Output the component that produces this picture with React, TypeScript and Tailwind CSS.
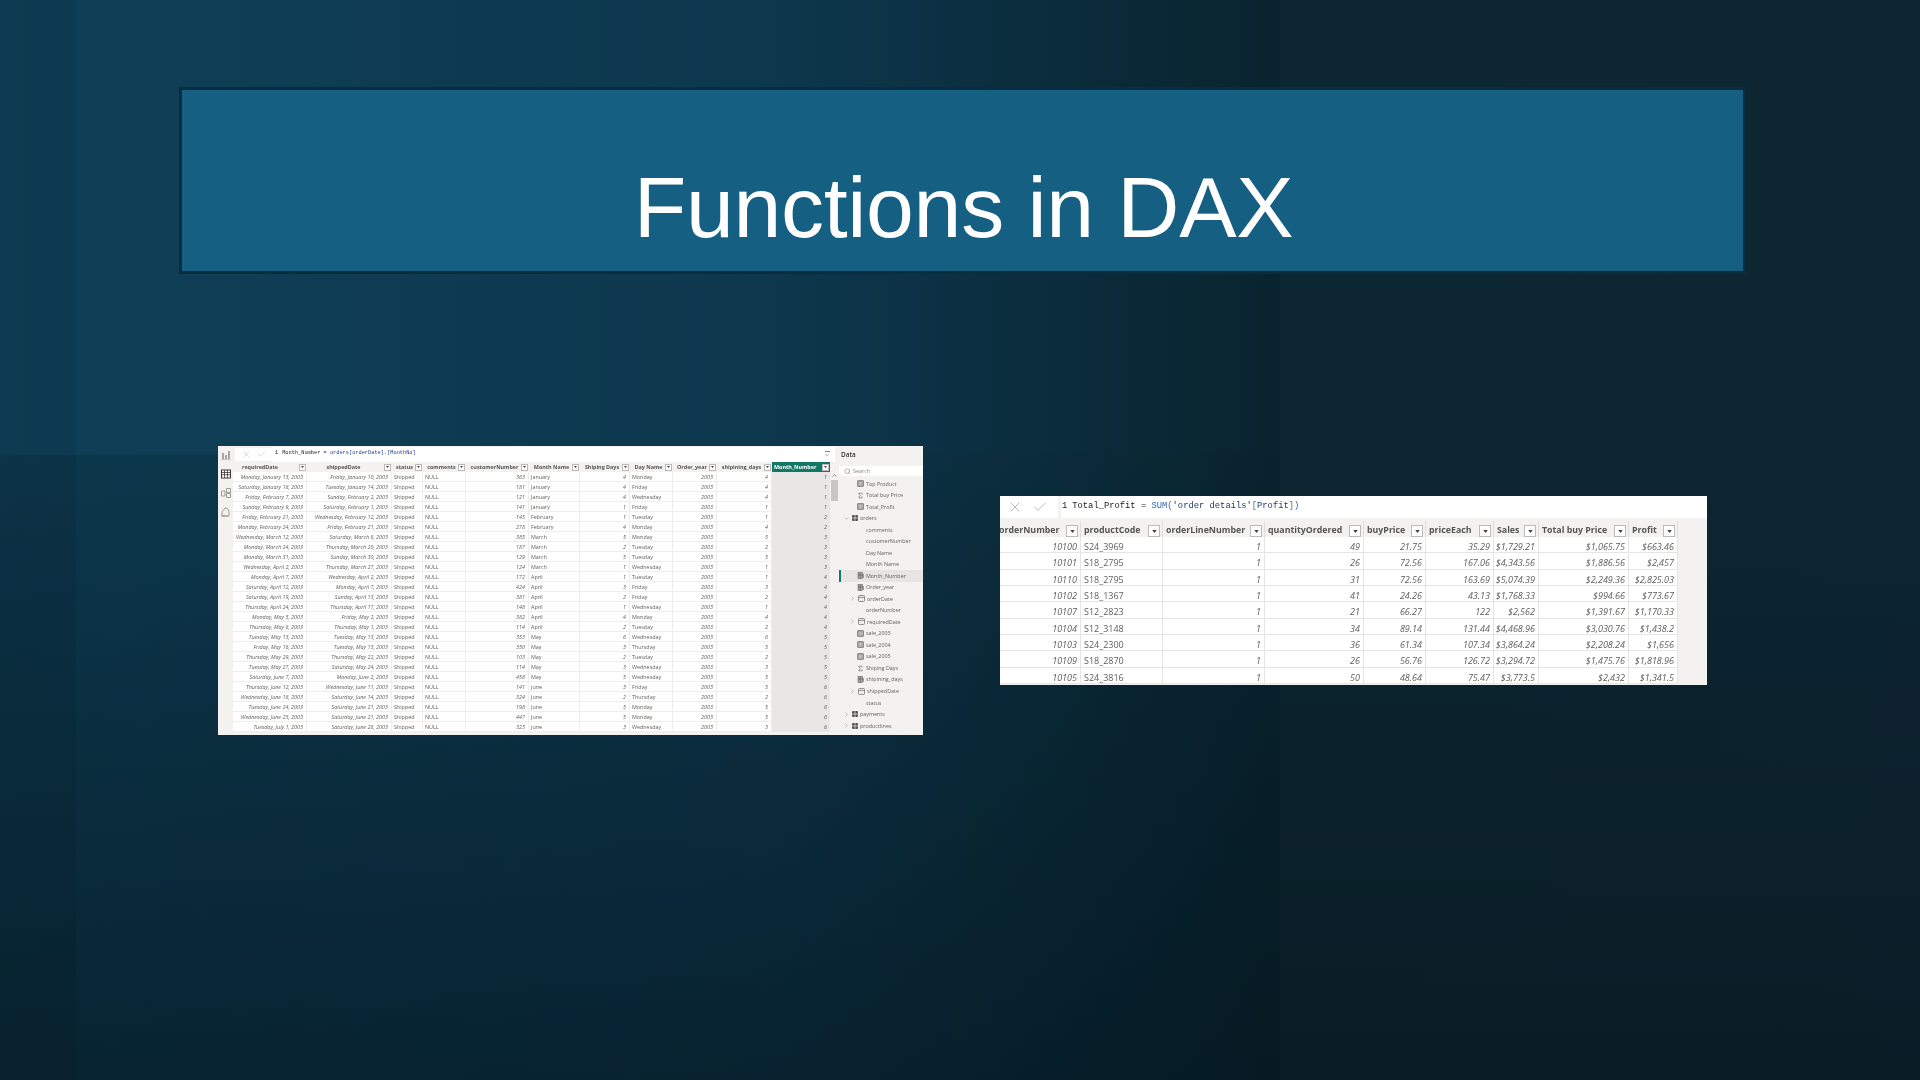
import { Check, ChevronDown, ChevronRight, ChevronUp, Search, Sigma, X } from "lucide-react";
import type { ReactNode } from "react";

const SANS = "font-['Open_Sans',sans-serif]";

type LeftRow = [string, string, string, string, string, string, string, string];

const LEFT_COLUMNS = [
  { name: "requiredDate", width: "w-[74px]", pad: "pr-[14px]" },
  { name: "shippedDate", width: "w-[85px]", pad: "pr-[6px]" },
  { name: "status", width: "w-[31px]", pad: "" },
  { name: "comments", width: "w-[43px]", pad: "" },
  { name: "customerNumber", width: "w-[63px]", pad: "" },
  { name: "Month Name", width: "w-[51px]", pad: "" },
  { name: "Shiping Days", width: "w-[50px]", pad: "" },
  { name: "Day Name", width: "w-[43px]", pad: "" },
  { name: "Order_year", width: "w-[44px]", pad: "" },
  { name: "shipining_days", width: "w-[55px]", pad: "" },
];

// required, shipped, customer, month, shipping days, day, shipining days, month number
const LEFT_ROWS: LeftRow[] = [
  ["Monday, January 13, 2003", "Friday, January 10, 2003", "363", "January", "4", "Monday", "4", "1"],
  ["Saturday, January 18, 2003", "Tuesday, January 14, 2003", "181", "January", "4", "Friday", "4", "1"],
  ["Friday, February 7, 2003", "Sunday, February 2, 2003", "121", "January", "4", "Wednesday", "4", "1"],
  ["Sunday, February 9, 2003", "Saturday, February 1, 2003", "141", "January", "1", "Friday", "1", "1"],
  ["Friday, February 21, 2003", "Wednesday, February 12, 2003", "145", "February", "1", "Tuesday", "1", "2"],
  ["Monday, February 24, 2003", "Friday, February 21, 2003", "278", "February", "4", "Monday", "4", "2"],
  ["Wednesday, March 12, 2003", "Saturday, March 8, 2003", "385", "March", "5", "Monday", "5", "3"],
  ["Monday, March 24, 2003", "Thursday, March 20, 2003", "187", "March", "2", "Tuesday", "2", "3"],
  ["Monday, March 31, 2003", "Sunday, March 30, 2003", "129", "March", "5", "Tuesday", "5", "3"],
  ["Wednesday, April 2, 2003", "Thursday, March 27, 2003", "124", "March", "1", "Wednesday", "1", "3"],
  ["Monday, April 7, 2003", "Wednesday, April 2, 2003", "172", "April", "1", "Tuesday", "1", "4"],
  ["Saturday, April 12, 2003", "Monday, April 7, 2003", "424", "April", "3", "Friday", "3", "4"],
  ["Saturday, April 19, 2003", "Sunday, April 13, 2003", "381", "April", "2", "Friday", "2", "4"],
  ["Thursday, April 24, 2003", "Thursday, April 17, 2003", "148", "April", "1", "Wednesday", "1", "4"],
  ["Monday, May 5, 2003", "Friday, May 2, 2003", "382", "April", "4", "Monday", "4", "4"],
  ["Thursday, May 8, 2003", "Thursday, May 1, 2003", "114", "April", "2", "Tuesday", "2", "4"],
  ["Tuesday, May 13, 2003", "Tuesday, May 13, 2003", "353", "May", "6", "Wednesday", "6", "5"],
  ["Friday, May 16, 2003", "Tuesday, May 13, 2003", "350", "May", "5", "Thursday", "5", "5"],
  ["Thursday, May 29, 2003", "Thursday, May 22, 2003", "103", "May", "2", "Tuesday", "2", "5"],
  ["Tuesday, May 27, 2003", "Saturday, May 24, 2003", "114", "May", "3", "Wednesday", "3", "5"],
  ["Saturday, June 7, 2003", "Monday, June 2, 2003", "458", "May", "5", "Wednesday", "5", "5"],
  ["Thursday, June 12, 2003", "Wednesday, June 11, 2003", "141", "June", "5", "Friday", "5", "6"],
  ["Wednesday, June 18, 2003", "Saturday, June 14, 2003", "324", "June", "2", "Thursday", "2", "6"],
  ["Tuesday, June 24, 2003", "Saturday, June 21, 2003", "198", "June", "5", "Monday", "5", "6"],
  ["Wednesday, June 25, 2003", "Saturday, June 21, 2003", "447", "June", "5", "Monday", "5", "6"],
  ["Tuesday, July 1, 2003", "Saturday, June 28, 2003", "323", "June", "3", "Wednesday", "3", "6"],
];

const RIGHT_COLUMNS = [
  { name: "orderNumber", width: "w-[81px]", clip: true },
  { name: "productCode", width: "w-[82px]" },
  { name: "orderLineNumber", width: "w-[102px]" },
  { name: "quantityOrdered", width: "w-[99px]" },
  { name: "buyPrice", width: "w-[62px]" },
  { name: "priceEach", width: "w-[68px]" },
  { name: "Sales", width: "w-[45px]" },
  { name: "Total buy Price", width: "w-[90px]" },
  { name: "Profit", width: "w-[49px]" },
];

const RIGHT_ROWS = [
  ["10100", "S24_3969", "1", "49", "21.75", "35.29", "$1,729.21", "$1,065.75", "$663.46"],
  ["10101", "S18_2795", "1", "26", "72.56", "167.06", "$4,343.56", "$1,886.56", "$2,457"],
  ["10110", "S18_2795", "1", "31", "72.56", "163.69", "$5,074.39", "$2,249.36", "$2,825.03"],
  ["10102", "S18_1367", "1", "41", "24.26", "43.13", "$1,768.33", "$994.66", "$773.67"],
  ["10107", "S12_2823", "1", "21", "66.27", "122", "$2,562", "$1,391.67", "$1,170.33"],
  ["10104", "S12_3148", "1", "34", "89.14", "131.44", "$4,468.96", "$3,030.76", "$1,438.2"],
  ["10103", "S24_2300", "1", "36", "61.34", "107.34", "$3,864.24", "$2,208.24", "$1,656"],
  ["10109", "S18_2870", "1", "26", "56.76", "126.72", "$3,294.72", "$1,475.76", "$1,818.96"],
  ["10105", "S24_3816", "1", "50", "48.64", "75.47", "$3,773.5", "$2,432", "$1,341.5"],
];

type FieldKind = "measure" | "sigma" | "calc" | "date" | "table" | "none";

const FIELDS: { name: string; kind: FieldKind; expand?: "open" | "closed"; indent: string; active?: boolean }[] = [
  { name: "Top Product", kind: "measure", indent: "pl-[18px]" },
  { name: "Total buy Price", kind: "sigma", indent: "pl-[18px]" },
  { name: "Total_Profit", kind: "measure", indent: "pl-[18px]" },
  { name: "orders", kind: "table", expand: "open", indent: "pl-[4px]" },
  { name: "comments", kind: "none", indent: "pl-[18px]" },
  { name: "customerNumber", kind: "none", indent: "pl-[18px]" },
  { name: "Day Name", kind: "none", indent: "pl-[18px]" },
  { name: "Month Name", kind: "none", indent: "pl-[18px]" },
  { name: "Month_Number", kind: "calc", indent: "pl-[16px]", active: true },
  { name: "Order_year", kind: "calc", indent: "pl-[18px]" },
  { name: "orderDate", kind: "date", expand: "closed", indent: "pl-[10px]" },
  { name: "orderNumber", kind: "none", indent: "pl-[18px]" },
  { name: "requiredDate", kind: "date", expand: "closed", indent: "pl-[10px]" },
  { name: "sale_2003", kind: "measure", indent: "pl-[18px]" },
  { name: "sale_2004", kind: "measure", indent: "pl-[18px]" },
  { name: "sale_2005", kind: "measure", indent: "pl-[18px]" },
  { name: "Shiping Days", kind: "sigma", indent: "pl-[18px]" },
  { name: "shipining_days", kind: "calc", indent: "pl-[18px]" },
  { name: "shippedDate", kind: "date", expand: "closed", indent: "pl-[10px]" },
  { name: "status", kind: "none", indent: "pl-[18px]" },
  { name: "payments", kind: "table", expand: "closed", indent: "pl-[4px]" },
  { name: "productlines", kind: "table", expand: "closed", indent: "pl-[4px]" },
];

function FilterButton({ big }: { big?: boolean }) {
  return (
    <span
      className={`flex shrink-0 items-center justify-center border border-[#bdbbb9] bg-white ${
        big ? "h-[12px] w-[12px]" : "h-[7px] w-[7px]"
      }`}
    >
      <svg viewBox="0 0 6 4" className={big ? "h-[3px] w-[5px]" : "h-[2px] w-[3px]"}>
        <path d="M0 0h6L3 4z" fill="#444" />
      </svg>
    </span>
  );
}

function FieldIcon({ kind }: { kind: FieldKind }) {
  if (kind === "none") return <span className="w-[7px] shrink-0" />;
  if (kind === "sigma") return <Sigma className="h-[7px] w-[7px] shrink-0 text-[#555]" strokeWidth={2} />;
  if (kind === "table") {
    return (
      <svg viewBox="0 0 6 6" className="h-[6px] w-[6px] shrink-0">
        <rect width="6" height="6" rx="1" fill="#555" />
        <path d="M3 0v6M0 3h6" stroke="#fff" strokeWidth="0.6" />
      </svg>
    );
  }
  if (kind === "date") {
    return (
      <svg viewBox="0 0 7 7" className="h-[7px] w-[7px] shrink-0">
        <rect x="0.5" y="0.5" width="6" height="6" rx="1" fill="#eee" stroke="#666" strokeWidth="0.7" />
        <path d="M0.5 2.4h6" stroke="#666" strokeWidth="0.7" />
      </svg>
    );
  }
  if (kind === "calc") {
    return (
      <svg viewBox="0 0 7 7" className="h-[7px] w-[7px] shrink-0">
        <rect x="1" y="0.5" width="4.5" height="6" fill="#aaa" stroke="#666" strokeWidth="0.6" />
        <path d="M3.2 0.5v6M1 3h4.5M6.4 2v4" stroke="#555" strokeWidth="0.6" />
      </svg>
    );
  }
  return (
    <svg viewBox="0 0 7 7" className="h-[7px] w-[7px] shrink-0">
      <rect x="0.5" y="0.5" width="6" height="6" rx="0.6" fill="#999" stroke="#666" strokeWidth="0.6" />
      <path d="M1.5 2.2h4M1.5 3.6h4M1.5 5h4" stroke="#eee" strokeWidth="0.5" />
    </svg>
  );
}

function RailIcons() {
  return (
    <div className="flex w-[15px] shrink-0 flex-col items-center gap-[9px] pt-[4px]">
      <svg viewBox="0 0 10 10" className="h-[10px] w-[10px]">
        <path d="M1 9V3h2v6zM4 9V5h2v4zM7 9V1h2v8z" fill="#a6a6a6" />
        <path d="M0.5 9.5h9" stroke="#a6a6a6" strokeWidth="0.6" />
      </svg>
      <svg viewBox="0 0 10 10" className="h-[10px] w-[10px]">
        <rect x="0.5" y="1" width="9" height="8" fill="#fff" stroke="#3b3a39" />
        <path d="M0.5 3.5h9M0.5 5.7h9M3.5 1v8M6.5 1v8" stroke="#3b3a39" strokeWidth="0.8" />
      </svg>
      <svg viewBox="0 0 10 10" className="h-[10px] w-[10px]">
        <path d="M0.5 3h3.5v5H0.5zM5.5 0.5h4v4h-4zM5.5 5.5h4v4h-4z" fill="none" stroke="#8a8886" strokeWidth="0.8" />
      </svg>
      <svg viewBox="0 0 10 10" className="h-[10px] w-[10px]">
        <path d="M1 9V5l3-4h2l2 3v5z" fill="none" stroke="#8a8886" strokeWidth="0.8" />
        <path d="M0.5 9h6" stroke="#8a8886" strokeWidth="0.8" />
      </svg>
    </div>
  );
}

function LeftCell({ width, num, children }: { width: string; num?: boolean; children: ReactNode }) {
  return (
    <span
      className={`${width} shrink-0 overflow-hidden border-r border-b border-[#efeeed] pt-[2px] leading-[7px] ${
        num ? "pr-[3px] text-right italic" : "pl-[2px]"
      }`}
    >
      {children}
    </span>
  );
}

function LeftShot() {
  return (
    <div className={`${SANS} flex h-[289px] w-[705px] shrink-0 overflow-hidden bg-[#f3f2f1] text-[5.4px] text-[#605e5c] blur-[0.4px]`}>
      <RailIcons />
      <div className="flex w-[605px] shrink-0 flex-col overflow-hidden">
        <div className="flex h-[16px] shrink-0 items-center pr-[3px] pl-[2px]">
          <div className="flex h-[13px] w-[37px] shrink-0 items-center justify-center gap-[6px] bg-white text-[#999]">
            <X className="h-[9px] w-[9px]" strokeWidth={1} />
            <Check className="h-[9px] w-[9px]" strokeWidth={1} />
          </div>
          <div className="flex h-[15px] min-w-0 flex-1 items-center gap-[4px] bg-white pl-[3px] font-['Liberation_Mono',monospace] text-[5.3px] text-[#222]">
            <span>1</span>
            <span>
              Month_Number = <span className="text-[#1f3a8a]">orders[orderDate].[MonthNo]</span>
            </span>
          </div>
          <div className="flex h-[15px] w-[16px] flex-col items-center justify-center bg-white">
            <span className="h-[1px] w-[5px] bg-[#888]" />
            <ChevronDown className="h-[6px] w-[6px]" />
          </div>
        </div>
        <div className="flex">
          <div className="flex w-[597px] shrink-0 flex-col bg-white">
            <div className="flex h-[10px] shrink-0 items-center bg-[#f3f2f1] font-bold text-[#555]">
              {LEFT_COLUMNS.map((col) => (
                <div key={col.name} className={`flex ${col.width} h-full shrink-0 items-center justify-between overflow-hidden pr-[1px] pl-[2px] whitespace-nowrap`}>
                  <span className={`flex-1 text-center ${col.pad}`}>{col.name}</span>
                  <FilterButton />
                </div>
              ))}
              <div className="flex h-full w-[58px] shrink-0 items-center justify-between bg-[#117865] pr-[1px] pl-[2px] text-white">
                <span>Month_Number</span>
                <FilterButton />
              </div>
            </div>
            {LEFT_ROWS.map((row) => (
              <div key={row[0] + row[1]} className="flex h-[10.03px] shrink-0 whitespace-nowrap">
                <LeftCell width="w-[74px]" num>{row[0]}</LeftCell>
                <LeftCell width="w-[85px]" num>{row[1]}</LeftCell>
                <LeftCell width="w-[31px]">Shipped</LeftCell>
                <LeftCell width="w-[43px]">NULL</LeftCell>
                <LeftCell width="w-[63px]" num>{row[2]}</LeftCell>
                <LeftCell width="w-[51px]">{row[3]}</LeftCell>
                <LeftCell width="w-[50px]" num>{row[4]}</LeftCell>
                <LeftCell width="w-[43px]">{row[5]}</LeftCell>
                <LeftCell width="w-[44px]" num>2003</LeftCell>
                <LeftCell width="w-[55px]" num>{row[6]}</LeftCell>
                <span className="w-[58px] shrink-0 bg-[#e8e7e5] pt-[2px] pr-[3px] text-right leading-[7px] italic">{row[7]}</span>
              </div>
            ))}
          </div>
          <div className="flex w-[8px] shrink-0 flex-col items-center bg-[#f3f2f1] pt-[10px]">
            <ChevronUp className="h-[7px] w-[7px] text-[#444]" strokeWidth={2} />
            <div className="mt-[1px] h-[21px] w-[7px] bg-[#c8c6c4]" />
          </div>
        </div>
      </div>
      <div className="min-w-0 flex-1 overflow-hidden pl-[1px]">
        <div className="flex h-[17px] items-center pl-[2px] text-[6.4px] font-semibold text-[#333]">Data</div>
        <div className="mt-[3px] flex h-[10px] items-center gap-[2px] bg-white pl-[5px] text-[#888]">
          <Search className="h-[7px] w-[7px]" />
          <span>Search</span>
        </div>
        <div className="mt-[2px]">
          {FIELDS.map((f) => (
            <div
              key={f.name}
              className={`flex h-[11.53px] items-center gap-[2px] whitespace-nowrap ${f.indent} ${
                f.active ? "border-l-2 border-[#117865] bg-[#e6e5e3]" : ""
              }`}
            >
              {f.expand === "open" && <ChevronDown className="h-[7px] w-[7px] shrink-0" strokeWidth={1.2} />}
              {f.expand === "closed" && <ChevronRight className="h-[7px] w-[7px] shrink-0" strokeWidth={1.2} />}
              <FieldIcon kind={f.kind} />
              <span>{f.name}</span>
            </div>
          ))}
        </div>
      </div>
    </div>
  );
}

function RightShot() {
  return (
    <div className={`${SANS} flex h-[189px] w-[707px] shrink-0 flex-col overflow-hidden bg-[#f3f2f1] text-[9px] text-[#605e5c] blur-[0.4px]`}>
      <div className="flex h-[22px] shrink-0 gap-[3px]">
        <div className="flex w-[58px] shrink-0 items-center justify-center gap-[9px] bg-white pr-[4px] text-[#999]">
          <X className="h-[16px] w-[16px]" strokeWidth={1} />
          <Check className="h-[16px] w-[16px]" strokeWidth={1} />
        </div>
        <div className="flex flex-1 gap-[5px] bg-white pt-[4px] pl-[1px] font-['Liberation_Mono',monospace] text-[8.8px] text-[#222]">
          <span>1</span>
          <span>
            Total_Profit = <span className="text-[#3165bb]">SUM</span>
            <span className="text-[#3165bb]">(</span>
            <span className="text-[#1f3a6e]">'order details'</span>
            <span className="text-[#2e8b57]">[</span>
            <span className="text-[#1f3a6e]">Profit</span>
            <span className="text-[#2e8b57]">]</span>
            <span className="text-[#3165bb]">)</span>
          </span>
        </div>
      </div>
      <div className="mt-[3px] flex h-[16px] shrink-0 items-center font-bold text-[#555]">
        {RIGHT_COLUMNS.map((col) => (
          <div
            key={col.name}
            className={`flex ${col.width} h-full shrink-0 items-center justify-between overflow-hidden border-r border-[#e1dfdd] pt-[4px] pr-[2px] text-[8.8px] ${col.clip ? "" : "pl-[3px]"}`}
          >
            <span className={col.clip ? "-ml-[1px] whitespace-nowrap" : "whitespace-nowrap"}>{col.name}</span>
            <FilterButton big />
          </div>
        ))}
      </div>
      {RIGHT_ROWS.map((row) => (
        <div key={row[0]} className="flex h-[16.35px] shrink-0">
          {row.map((cell, i) => (
            <span
              key={RIGHT_COLUMNS[i].name}
              className={`${RIGHT_COLUMNS[i].width} flex h-full shrink-0 items-center border-r border-b border-[#e6e5e4] bg-white pt-[4px] ${
                i === 1 ? "pl-[3px]" : "justify-end pr-[3px] italic"
              }`}
            >
              {cell}
            </span>
          ))}
        </div>
      ))}
    </div>
  );
}

export default function App() {
  return (
    <div className="h-[1080px] w-[1920px] overflow-hidden pt-[87px] pl-[179px] [background:linear-gradient(to_right,rgba(0,0,0,.08)_76px,transparent_76px,transparent_1280px,rgba(255,255,255,.012)_1280px),linear-gradient(to_right,rgba(3,18,26,.16),transparent_55%)_0_455px/100%_625px_no-repeat,linear-gradient(to_bottom,transparent_42%,rgba(3,18,26,.04)_42%,rgba(3,18,26,.55)_100%),linear-gradient(to_right,#0f4058_0%,#0d374d_40%,#09242f_66%,#0b2431_100%)]">
      <div className="flex h-[187px] w-[1567px] justify-center border-[3px] border-[#0a2c3f] bg-[#156082] pt-[74px] pl-[2px]">
        <h1 className="font-['Liberation_Sans',sans-serif] text-[86px] leading-none font-normal tracking-[-0.3px] text-white">Functions in DAX</h1>
      </div>
      <div className="mt-[172px] ml-[39px] flex items-center gap-[77px]">
        <LeftShot />
        <RightShot />
      </div>
    </div>
  );
}
